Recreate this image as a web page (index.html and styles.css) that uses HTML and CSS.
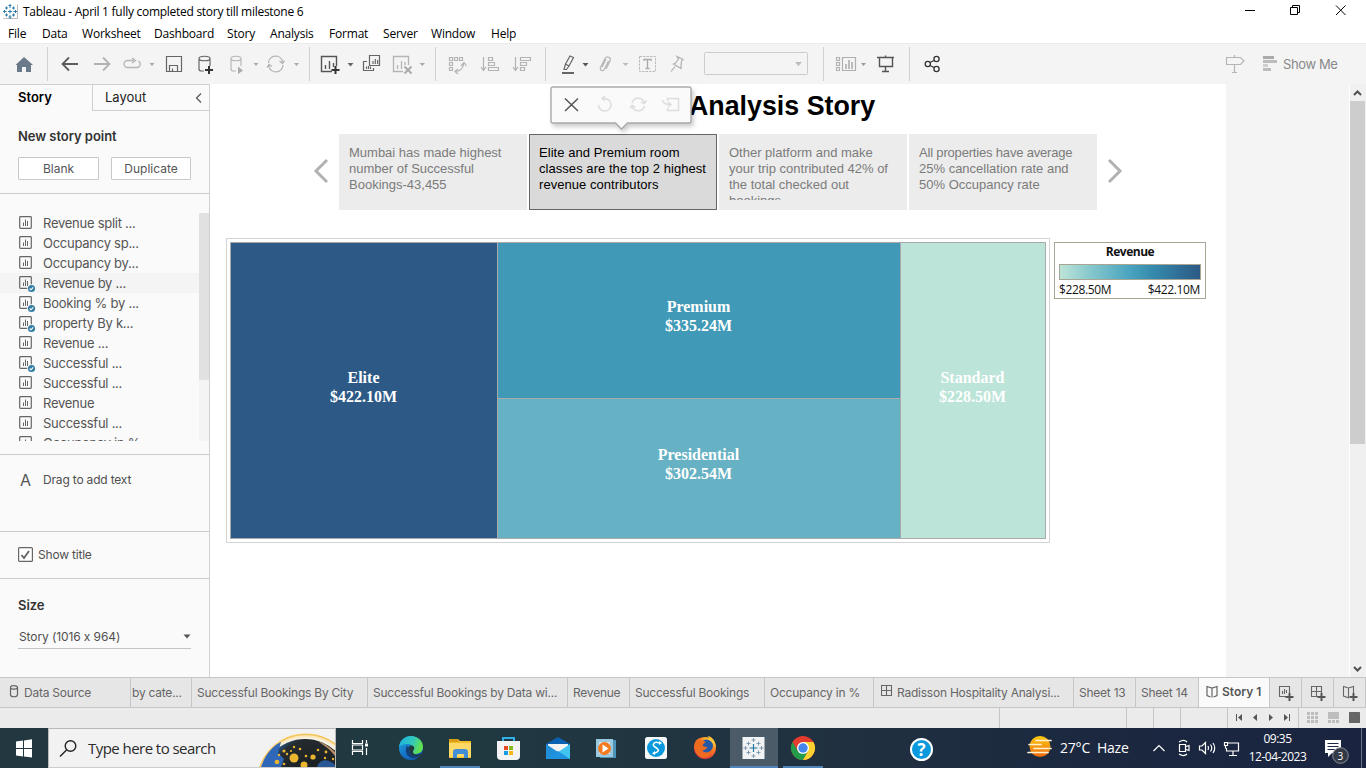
FILE: index.html
```html
<!DOCTYPE html>
<html lang="en">
<head>
<meta charset="utf-8">
<title>Tableau - April 1 fully completed story till milestone 6</title>
<link rel="stylesheet" href="styles.css">
</head>
<body>
<svg class="defs" width="0" height="0">
  <defs>
    <g id="sheet"><rect x=".7" y=".7" width="11.6" height="11.6" rx=".8" fill="none" stroke="#666" stroke-width="1.2"/><path d="M4.5 10V6.5M6.5 10V3.5M8.5 10V5" stroke="#666" fill="none"/></g>
    <g id="used"><circle cx="12.500" cy="12.500" r="4.300" fill="#fafafa"/><circle cx="12.500" cy="12.500" r="3.600" fill="#357ea3"/><path d="M10.700 12.500l1.300 1.300 2.300-2.500" fill="none" stroke="#fff" stroke-width="1.100"/></g>
    <g id="plus"><path d="M0 4h8M4 0v8" stroke-width="2" fill="none"/></g>
    <linearGradient id="edge" x1="0" y1="0" x2="1" y2="1"><stop offset="0" stop-color="#24a9dc"/><stop offset=".5" stop-color="#1673c8"/><stop offset="1" stop-color="#0c4c9b"/></linearGradient>
    <linearGradient id="edge2" x1="0" y1="0" x2="1" y2=".3"><stop offset="0" stop-color="#1eaee5"/><stop offset=".6" stop-color="#31c9bd"/><stop offset="1" stop-color="#62df4f"/></linearGradient>
    <linearGradient id="sun" x1="0" y1="0" x2="0" y2="1"><stop offset="0" stop-color="#fccb10"/><stop offset="1" stop-color="#ed6710"/></linearGradient>
    <radialGradient id="fox" cx=".7" cy=".2" r=".9"><stop offset="0" stop-color="#ffdc3b"/><stop offset=".5" stop-color="#ff7b22"/><stop offset="1" stop-color="#d92748"/></radialGradient>
    <radialGradient id="earth" cx=".62" cy=".45" r=".62"><stop offset="0" stop-color="#151a1c"/><stop offset=".75" stop-color="#252b2e"/><stop offset="1" stop-color="#2f76c8"/></radialGradient>
  </defs>
</svg>

<header class="titlebar">
  <svg width="19" height="24" viewBox="0 0 19 24"><path d="M3.500 18.500h14V4.500" fill="none" stroke="#bbb"/><path d="M10 4v4M8.500 5.500h3M10 15v4M8.500 17h3M3 11.500h3.500M4.500 10v3M13.500 11.500H17M15.500 10v3M6.500 6.500v3M5 8h3M13.500 6.500v3M12 8h3M6.500 13.500v3M5 15h3M13.500 13.500v3M12 15h3M8 11.500h4M10 9.500v4" stroke="#2b7cab" fill="none"/></svg>
  <span class="window-title">Tableau - April 1 fully completed story till milestone 6</span>
  <svg class="window-controls" width="126" height="24" viewBox="1240 0 126 24" fill="none" stroke="#000"><path d="M1245 10.500h10M1290.500 7.500h7v7h-7zM1292.500 7.500v-2h7v7h-2M1336 5.500l9.500 9.500M1345.500 5.500l-9.500 9.500"/></svg>
</header>

<nav class="menubar"><span>File</span><span>Data</span><span>Worksheet</span><span>Dashboard</span><span>Story</span><span>Analysis</span><span>Format</span><span>Server</span><span>Window</span><span>Help</span></nav>

<div class="toolbar">
  <svg viewBox="0 43 47 41"><path d="M15.500 65L24 57l9 8h-2v7h-5v-5h-4v5h-5v-7z" fill="#6a7a8a"/></svg>
  <svg class="sep" viewBox="47 43 68 41" fill="none" stroke-width="1.800"><path d="M62.500 64H78M69 57.500L62.500 64l6.500 6.500" stroke="#5c5c5c"/><path d="M94 64h15.500M103 57.500l6.500 6.500-6.500 6.500" stroke="#b2b2b2"/></svg>
  <svg viewBox="115 43 45 41"><path d="M134 60.500h-6.500a3.500 3.500 0 0 0 0 7H137a3.500 3.500 0 0 0 1.500-6.500M132 58l3.500 2.500L132 63" fill="none" stroke="#b5b5b5" stroke-width="1.300"/><path d="M149.500 63h5l-2.500 3z" fill="#aaa"/></svg>
  <svg viewBox="160 43 30 41"><path d="M166.500 56.500h15v15h-15zM169.500 71v-5.500h8V71M172.500 71v-2.500" fill="none" stroke="#666" stroke-width="1.200"/></svg>
  <svg viewBox="190 43 30 41"><path d="M204 71h-2.500c-1.500 0-2.500-1-2.500-2V58.500M210 58.500V66M199 58.500c0-3 11-3 11 0s-11 3-11 0" fill="none" stroke="#666" stroke-width="1.200"/><use href="#plus" x="205" y="66" stroke="#333"/></svg>
  <svg viewBox="220 43 42 41"><path d="M236 71h-2.500c-1.500 0-2.500-1-2.500-2V58.500M241 58.500V66M231 58.500c0-3 10-3 10 0s-10 3-10 0" fill="none" stroke="#b8b8b8" stroke-width="1.200"/><path d="M238 66.500l5 4-5 3.500zM253.500 63h5l-2.500 3z" fill="#aaa"/></svg>
  <svg viewBox="262 43 47 41"><path d="M268.500 63a7.200 7.200 0 0 1 14-2v2M283 65a7.200 7.200 0 0 1-14 2v-2M279.500 61l3 2.500 2-3M267 67.500l2-3 3 2" fill="none" stroke="#b5b5b5" stroke-width="1.300"/><path d="M294 63h5l-2.500 3z" fill="#aaa"/></svg>
  <svg class="sep" viewBox="309 43 47 41"><path d="M332 71.500h-10.500v-15h15V66M325.500 69v-4M329.500 69v-8M333.500 67v-4" fill="none" stroke="#555" stroke-width="1.400"/><use href="#plus" x="331.500" y="66" stroke="#333"/><path d="M347.500 63h6l-3 3.500z" fill="#666"/></svg>
  <svg viewBox="356 43 30 41"><path d="M369.500 55.500h10v10h-10zM373 64v-3M375.300 64v-5M377.600 64v-4M367 61.500h-3.500v9h10V68M366.500 69v-2.500M368.500 69v-3M370.500 69v-2.500" fill="none" stroke="#666" stroke-width="1.200"/></svg>
  <svg viewBox="386 43 49 41"><path d="M403 71.500h-9.500v-15h15V65M397.500 69v-4M401.500 69v-8M405 65v-3" fill="none" stroke="#b5b5b5" stroke-width="1.300"/><path d="M404.500 66.500l7 7M411.500 66.500l-7 7" stroke="#aaa" stroke-width="2"/><path d="M419.500 63h5.500l-2.700 3z" fill="#aaa"/></svg>
  <svg class="sep" viewBox="435 43 38 41" fill="none" stroke="#b3b3b3" stroke-width="1.200"><path d="M449.500 57.500h3v3h-3zM454.500 57.500h3v3h-3zM459.500 57.500h3v3h-3zM449.500 62.500h3v3h-3zM449.500 67.500h3v3h-3zM455 71.500c5.500 0 8-2.500 9-8.500M458 69l-3 2.500 3 2.500M461 66l3-3.500 2.500 3.500"/></svg>
  <svg viewBox="473 43 32 41" fill="none" stroke="#b3b3b3" stroke-width="1.200"><path d="M483.500 57v13M481 67l2.500 3.500L486 67M488.500 57.500h4v3h-4zM488.500 62.500h6v3h-6zM488.500 67.500h10v3h-10z"/></svg>
  <svg viewBox="505 43 40 41" fill="none" stroke="#b3b3b3" stroke-width="1.200"><path d="M515.500 57v13M513 67l2.500 3.500L518 67M520.500 57.500h10v3h-10zM520.500 62.500h6v3h-6zM520.500 67.500h4v3h-4z"/></svg>
  <svg class="sep" viewBox="545 43 48 41"><path d="M564 69.500l1.500-5.500 4.500-8 3.500 1.500-4.500 8.500-2.500 3.500zM565.500 64l3.500 2" fill="none" stroke="#666" stroke-width="1.200"/><path d="M562 73h12" stroke="#666" stroke-width="2"/><path d="M582.500 63h6l-3 3.500z" fill="#555"/></svg>
  <svg viewBox="593 43 39 41"><path d="M608.500 61l-4 8c-1.500 3-5 1.500-4-1.500l4.500-9c2-3 6.500-1 5 2.500L606 69M602 67l4-8" fill="none" stroke="#b5b5b5" stroke-width="1.200"/><path d="M622.500 63h6l-3 3z" fill="#bbb"/></svg>
  <svg viewBox="632 43 32 41"><path d="M639.500 56.500h16v15h-16z" fill="none" stroke="#bbb" stroke-dasharray="2.500 1"/><path d="M644 61v-1.500h7V61M647.500 60v8.500M645.500 68.500h4" fill="none" stroke="#aaa" stroke-width="1.300"/></svg>
  <svg viewBox="664 43 40 41"><path d="M677 56.500l6 3-1.500 1.500-.5 5 0 2.500-7.500-4.500 2-1 3-4zM675 66.500l-4 5" fill="none" stroke="#b0b0b0" stroke-width="1.200"/></svg>
  <svg viewBox="704 43 119 41"><rect x="704.500" y="52.500" width="103" height="22" rx="1" fill="none" stroke="#ccc"/><path d="M795 62h7l-3.500 4z" fill="#bbb"/></svg>
  <svg class="sep" viewBox="823 43 47 41"><path d="M836.500 57.500h3v3h-3zM836.500 62.500h3v3h-3zM836.500 67.500h3v3h-3zM842.500 57.500h13v13h-13z" fill="none" stroke="#b0b0b0" stroke-width="1.200"/><path d="M846 69v-5M849 69v-9M852 69v-7" stroke="#aaa" stroke-width="1.500"/><path d="M861 63h5l-2.500 3z" fill="#999"/></svg>
  <svg viewBox="870 43 39 41"><path d="M877 57.500h17M879.500 58v8.500h13V58M885.500 66.500v5M882 71.500h7M885.500 55.500v2" fill="none" stroke="#555" stroke-width="1.400"/></svg>
  <svg class="sep" viewBox="909 43 316 41"><path d="M930 62.500l4-2M930 65.500l4 2" stroke="#333" stroke-width="1.300"/><g fill="none" stroke="#333" stroke-width="1.300"><circle cx="927.800" cy="64" r="2.600"/><circle cx="936.500" cy="59" r="2.600"/><circle cx="936.500" cy="69" r="2.600"/></g></svg>
  <svg viewBox="1225 43 30 41"><path d="M1226.500 57.500h14l3.500 3.500-3.500 3.500h-14zM1234.500 64.500v8M1232 72.500h5M1234.500 55v2.500" fill="none" stroke="#b5b5b5" stroke-width="1.200"/></svg>
  <svg viewBox="1255 43 28 41"><path d="M1263 56h11v3h-11z" fill="#aaa"/><path d="M1263 60h14v3h-14zM1263 68h8v3h-8z" fill="#bcbcbc"/><path d="M1263 64h5v3h-5z" fill="#cfcfcf"/></svg>
  <span class="show-me">Show Me</span>
</div>

<main class="workspace">
  <aside class="panel">
    <div class="panel-tabs"><b>Story</b><div class="layout-tab"><span>Layout</span><svg width="8" height="12" viewBox="0 0 8 12"><path d="M6 1.500L1.500 6 6 10.500" fill="none" stroke="#555" stroke-width="1.200"/></svg></div></div>
    <section class="new-point"><h2>New story point</h2><div class="buttons"><button>Blank</button><button>Duplicate</button></div></section>
    <section class="sheets">
      <ul>
        <li><svg><use href="#sheet"/></svg>Revenue split ...</li>
        <li><svg><use href="#sheet"/></svg>Occupancy sp...</li>
        <li><svg><use href="#sheet"/></svg>Occupancy by...</li>
        <li class="hover"><svg><use href="#sheet"/><use href="#used"/></svg>Revenue by ...</li>
        <li><svg><use href="#sheet"/><use href="#used"/></svg>Booking % by ...</li>
        <li><svg><use href="#sheet"/><use href="#used"/></svg>property By k...</li>
        <li><svg><use href="#sheet"/></svg>Revenue ...</li>
        <li><svg><use href="#sheet"/><use href="#used"/></svg>Successful ...</li>
        <li><svg><use href="#sheet"/></svg>Successful ...</li>
        <li><svg><use href="#sheet"/></svg>Revenue</li>
        <li><svg><use href="#sheet"/></svg>Successful ...</li>
        <li><svg><use href="#sheet"/></svg>Occupancy in %</li>
      </ul>
      <div class="list-scroll"><i></i></div>
    </section>
    <section class="drag"><span class="letter">A</span>Drag to add text</section>
    <section class="show-title"><svg width="15" height="15" viewBox="0 0 15 15" fill="none" stroke="#666"><rect x=".6" y=".6" width="13.800" height="13.800" rx="1" fill="#fff" stroke-width="1.200"/><path d="M3.500 8l2.500 3 5-7" stroke-width="1.900"/></svg>Show title</section>
    <section class="size"><h2>Size</h2><div class="size-select">Story (1016 x 964)<svg width="8" height="5" viewBox="0 0 8 5"><path d="M.5.500h7L4 4.500z" fill="#555"/></svg></div></section>
  </aside>

  <div class="canvas">
    <h1>Analysis Story</h1>
    <div class="popup"><svg width="142" height="45" viewBox="551 86 142 45"><path d="M553.500 87h136.500q2 0 2 2v32q0 2-2 2h-61.500l-6 6-6-6h-62.500q-2 0-2-2V89q0-2 2-2z" fill="#fafafa" stroke="#aaa" stroke-width="1.400"/><g fill="none" stroke="#ddd" stroke-width="1.500"><path d="M566 98.500l13 12.500M579 98.500L566 111" stroke="#555"/><path d="M603 98.500h3a6.300 6.300 0 1 1-6.500 6.500M606 96l-3 2.500 3 2.500M633 103a6.500 6.500 0 0 1 12.500 0M645.500 106a6.500 6.500 0 0 1-12.500 0M642 102l3.500 1.500 2-3M631 108.500l2-3 3.500 1.500M668.500 101v-2.500h11v12h-11V108M663.500 100c0 3 2 4.500 8.500 4.500M669 102l3 2.500-3 2.500"/></g></svg></div>
    <div class="navigator">
      <svg width="15" height="26" viewBox="0 0 15 26"><path d="M13 3L3 13l10 10" fill="none" stroke="#b1b1b1" stroke-width="3" stroke-linecap="square"/></svg>
      <div class="points">
        <div class="point"><p>Mumbai has made highest<br>number of Successful<br>Bookings-43,455</p></div>
        <div class="point active"><p>Elite and Premium room<br>classes are the top 2 highest<br>revenue contributors</p></div>
        <div class="point"><p>Other platform and make<br>your trip contributed 42% of<br>the total checked out<br>bookings</p></div>
        <div class="point"><p><span class="tight">All properties have average</span><br>25% cancellation rate and<br>50% Occupancy rate</p></div>
      </div>
      <svg width="15" height="26" viewBox="0 0 15 26"><path d="M2 3l10 10L2 23" fill="none" stroke="#b1b1b1" stroke-width="3" stroke-linecap="square"/></svg>
    </div>
    <div class="viz">
      <div class="frame"><div class="treemap">
        <div class="tile elite">Elite<br>$422.10M</div>
        <div class="tile premium">Premium<br>$335.24M</div>
        <div class="tile presidential">Presidential<br>$302.54M</div>
        <div class="tile standard">Standard<br>$228.50M</div>
      </div></div>
      <div class="legend"><b>Revenue</b><div class="ramp"></div><div class="range"><span>$228.50M</span><span>$422.10M</span></div></div>
    </div>
  </div>
  <div class="outside"></div>
  <div class="scrollbar"><svg width="16" height="17" viewBox="0 0 16 17"><path d="M4 11l3.500-3.500L11 11" fill="none" stroke="#505050" stroke-width="2"/></svg><i></i><svg width="16" height="17" viewBox="0 0 16 17"><path d="M4 7l3.500 3.500L11 7" fill="none" stroke="#505050" stroke-width="2"/></svg></div>
</main>

<div class="tabs">
  <span class="source"><svg width="11" height="13" viewBox="0 0 11 13"><path d="M1.500 2.500v7c0 3 7 3 7 0v-7c0-2.500-7-2.500-7 0s7 2 7 0" fill="none" stroke="#666" stroke-width="1.200"/></svg>Data Source</span>
  <span class="cut">by cate...</span><span>Successful Bookings By City</span><span>Successful Bookings by Data wi...</span><span>Revenue</span><span>Successful Bookings</span><span>Occupancy in %</span>
  <span class="dash"><svg width="12" height="12" viewBox="0 0 12 12"><path d="M.5.500h10v10H.5zM5.500.500v10M.5 5.500h10" fill="none" stroke="#666" stroke-width="1.100"/></svg>Radisson Hospitality Analysi...</span>
  <span>Sheet 13</span><span>Sheet 14</span>
  <span class="current"><svg width="12" height="14" viewBox="0 0 12 14"><path d="M6 3v9.500M4.500 12L1 10.500V1.500L6 3l5-1.500v9L7.500 12" fill="none" stroke="#666" stroke-width="1.200"/></svg>Story 1</span>
  <span class="new"><svg width="16" height="16" viewBox="0 0 16 16"><path d="M8 11.500H1.500v-10h10V8M4.500 9V6M6.500 9V4M8.500 8V5" fill="none" stroke="#666" stroke-width="1.100"/><use href="#plus" x="7.500" y="8" stroke="#555"/></svg></span>
  <span class="new"><svg width="16" height="16" viewBox="0 0 16 16"><path d="M8 11.500H1.500v-10h10V8M6.500 1.500v10M1.500 6.500h10" fill="none" stroke="#666" stroke-width="1.100"/><use href="#plus" x="7.500" y="8" stroke="#555"/></svg></span>
  <span class="new"><svg width="16" height="16" viewBox="0 0 16 16"><path d="M7 13l-5.500-2V1.500L6.500 3l5-1.500V8M6.500 3v9.500" fill="none" stroke="#666" stroke-width="1.100"/><use href="#plus" x="7.500" y="8" stroke="#555"/></svg></span>
</div>

<div class="status">
  <span></span><span></span><span></span><span></span><span></span>
  <span><svg width="70" height="20" viewBox="1228 708 70 20" fill="#555"><path d="M1236 714h1v7h-1zM1242 714v7l-4-3.500zM1257 714v7l-4-3.500zM1269 714v7l4-3.500zM1284 714v7l4-3.500zM1289 714h1v7h-1z"/></svg></span>
  <span><svg width="67" height="20" viewBox="1299 708 67 20"><path d="M1307 712h3v3h-3zM1311 712h3v3h-3zM1315 712h3v3h-3zM1307 716h3v3h-3zM1311 716h3v3h-3zM1315 716h3v3h-3zM1307 720h3v3h-3zM1311 720h3v3h-3zM1315 720h3v3h-3zM1328 712h11v7h-11zM1328 720h3v3h-3zM1332 720h3v3h-3zM1336 720h3v3h-3z" fill="#bdbdbd"/><rect x="1349" y="712" width="11" height="11" rx=".5" fill="#666"/></svg></span>
</div>

<footer class="taskbar">
  <svg viewBox="0 728 48 40"><path d="M16 741.500l7-1v7.500h-7zM24 740.400l8-1.100v8.700h-8zM16 749h7v7.400l-7-1zM24 749h8v8.600l-8-1.100z" fill="#fff"/></svg>
  <div class="search">
    <svg width="20" height="20" viewBox="59 738 20 20" fill="none" stroke="#222" stroke-width="1.400"><circle cx="70.500" cy="746" r="5.300"/><path d="M66.500 750l-6.500 6.500"/></svg>
    <span>Type here to search</span>
    <svg class="globe" width="78" height="36" viewBox="257 732 78 36"><defs><clipPath id="globe-clip"><rect x="257" y="732" width="78" height="36"/></clipPath></defs><g clip-path="url(#globe-clip)"><circle cx="305" cy="782" r="48" fill="#fbe9c0"/><circle cx="306" cy="784" r="48.500" fill="none" stroke="#f3c45c" stroke-width="1.500"/><circle cx="306" cy="786" r="47.500" fill="#f7f3e8"/><circle cx="305" cy="785" r="45" fill="url(#earth)"/><path d="M261 768c5-14 12-21 20-25l-3 11 6 6-3 8z" fill="#2f68b9"/><path d="M317 768c2-7 10-10 18-2v2z" fill="#295795"/><path d="M318 742c8 3 13 7 17 11v4c-6-8-12-11-17-15z" fill="#b68f65"/><g fill="#eab52f"><circle cx="294" cy="759" r="4.500"/><circle cx="313" cy="758" r="2.600"/><circle cx="304" cy="766" r="3.500"/><circle cx="277" cy="763" r="2.300"/><circle cx="284" cy="752" r="1.600"/><circle cx="294" cy="748" r="1.200"/><circle cx="300" cy="750" r="1.300"/><circle cx="318" cy="751" r="1.300"/><circle cx="326" cy="753" r="1.400"/><circle cx="325" cy="759" r="1.200"/><circle cx="333" cy="760" r="1.200"/><circle cx="287" cy="755" r="1.200"/><circle cx="291" cy="752" r="1.100"/><circle cx="284" cy="765" r="1.300"/><circle cx="279" cy="756" r="1.200"/><circle cx="306" cy="757" r="1.300"/></g></g></svg>
  </div>
  <svg viewBox="336 728 50 40" fill="none" stroke="#fff" stroke-width="1.200"><path d="M352.500 740v3.500h10V740M352.500 755v-3.500h10v3.500M352.500 745h10v5h-10zM366.500 740v3M366.500 748v7"/><path d="M365 743.500h3v3h-3z" fill="#fff" stroke="none"/></svg>
  <svg viewBox="386 728 50 40"><circle cx="411" cy="748" r="12" fill="url(#edge)"/><path d="M399 747c1-7 6-11 12-11 7 0 12 5 12 11 0 5-4 7-8 7-3 0-4-2-2-4 1-3-2-6-5-6-4 0-8 1-9 3z" fill="url(#edge2)"/><path d="M407 746c-3 5 0 12 7 12 3 0 5-1 7-3-3 1-7 1-9-1-2-1-4-4-3-7z" fill="#123f77"/><path d="M409 747c1-2 4-2 5 0 1 2-1 3-1 5 0 3 6 4 9 1l-2 3c-6 1-12-2-11-9z" fill="#223940"/></svg>
  <svg viewBox="436 728 48 40"><path d="M449 739h9l2 2h11v17h-22z" fill="#f5bd28"/><path d="M449 743h22v14h-22z" fill="#ffd968"/><path d="M449 739h9l1 3h-10z" fill="#d99c16"/><path d="M453 758v-6q0-3 3-3h9q3 0 3 3v6h-4v-3q0-1-1-1h-5q-1 0-1 1v3z" fill="#428fd8"/><path d="M440 766h40v2h-40z" fill="#4f84bb"/></svg>
  <svg viewBox="484 728 48 40"><path d="M503 743v-5h11v5" fill="none" stroke="#30b2e8" stroke-width="2"/><path d="M497 741h23v15q0 4-4 4h-15q-4 0-4-4z" fill="#f3f3f3"/><path d="M504 746h4v4h-4z" fill="#e34b25"/><path d="M509 746h4v4h-4z" fill="#83bd22"/><path d="M504 751h4v4h-4z" fill="#159ee4"/><path d="M509 751h4v4h-4z" fill="#f8b815"/></svg>
  <svg viewBox="532 728 49 40"><path d="M546 744l12-7 12 7v15h-24z" fill="#0b61b2"/><path d="M548 744h20v8h-20z" fill="#f4f4f4"/><path d="M546 744l12 8-9 7h-3z" fill="#208ed8"/><path d="M570 744l-22 15h22z" fill="#42c4f1"/><path d="M546 759l12-8 12 8z" fill="#1f93e0"/></svg>
  <svg viewBox="581 728 50 40"><path d="M600 740h16v18h-16z" fill="#4e94b9"/><path d="M596 739h17v18h-17z" fill="#9bc9df"/><path d="M599 742h11v12h-11z" fill="#d6e8ef"/><circle cx="604.500" cy="748.500" r="6.500" fill="#f27a20"/><path d="M602.500 744.500v8l6-4z" fill="#fff"/></svg>
  <svg viewBox="631 728 49 40"><rect x="645" y="737" width="22" height="22" rx="2.500" fill="#f8f8f8"/><circle cx="656" cy="748" r="9" fill="#0999dc"/><path d="M659 743c-4-2-8 1.500-4 4s5 4 0 6" fill="none" stroke="#fff" stroke-width="1.500"/><path d="M659 741l3 2-3 2zM655 751v4l-3-1.500z" fill="#fff"/></svg>
  <svg viewBox="680 728 49 40"><circle cx="704.500" cy="748" r="11" fill="url(#fox)"/><circle cx="706" cy="746" r="6.500" fill="#2659a4"/><path d="M694 744c1-4 3-5 5-6l1 3c2-1 4 0 5 1l-3 3c1 2 3 2 5 2-2 4-6 3-7 5 4 3 9 1 12-3 0 6-5 9-10 9-6-2-9-8-8-14z" fill="#ef6b20"/><path d="M707 736c6 1 9 7 8 12-2-5-4-7-8-12z" fill="#ffc439"/></svg>
  <svg class="running" viewBox="730 728 48 40"><path d="M730 766h48v2h-48z" fill="#4f84bb"/><rect x="742.500" y="737" width="22" height="22" fill="#f2f3f5"/><path d="M753.500 744v8M749.500 748h8" stroke="#24769f" stroke-width="1.200"/><path d="M753.500 738v4M751.500 740h4M753.500 754v4M751.500 756h4M743.500 748h4M745.500 746v4M759.500 748h4M761.500 746v4M748.500 741.500v4M746.500 743.500h4M758.500 741.500v4M756.500 743.500h4M748.500 750.500v4M746.500 752.500h4M758.500 750.500v4M756.500 752.500h4" stroke="#7791ad" stroke-width=".9"/></svg>
  <svg viewBox="778 728 122 40"><circle cx="803" cy="748" r="12" fill="#e33b2e"/><path d="M792.600 742A12 12 0 0 0 803 760l5.200-9H797.800z" fill="#219c4b"/><path d="M813.400 742A12 12 0 0 1 803 760l5.200-9-5.200-9z" fill="#fdd22f"/><circle cx="803" cy="748" r="6" fill="#fff"/><circle cx="803" cy="748" r="4.700" fill="#4285ed"/><path d="M783 766h40v2h-40z" fill="#4f84bb"/></svg>
  <div class="help"><i>?</i></div>
  <svg viewBox="1018 728 42 40"><circle cx="1040" cy="746.500" r="10.500" fill="url(#sun)"/><path d="M1036 740.500h15M1029 744.500h12M1034 748.500h17M1028 752.500h20" stroke="#fff0cf" stroke-width="1.700" stroke-linecap="round"/></svg>
  <span class="weather">27°C&nbsp; Haze</span>
  <svg viewBox="1142 728 106 40" fill="none" stroke="#fff" stroke-width="1.200"><path d="M1153.500 751l5.500-5.500 5.500 5.500M1179.500 744.500h6v7h-6zM1186 746.500l3-1v5l-3-1M1179 742c3-2 6-2 8 0M1179 754c3 2 6 2 8 0M1199.500 746h2.500l3.500-3.500v11L1202 750h-2.500zM1208 746q1 2 0 4M1210.500 744.500q2.500 3.500 0 7M1213 743q3.500 5 0 10M1227.500 743h11v8h-12v-3M1233 751v4M1229 755.500h8M1224.500 742.500h3v3h-3zM1225.500 745.500v3"/></svg>
  <div class="clock"><span>09:35</span><span>12-04-2023</span></div>
  <svg viewBox="1307 728 59 40"><path d="M1325 740h16v13h-9l-4 4v-4h-3z" fill="#fff"/><path d="M1327.500 743.500h11M1327.500 746.500h11M1327.500 749.500h7" stroke="#1b2841"/><circle cx="1340.500" cy="755.500" r="7.800" fill="#333a46" stroke="#8b9098"/><text x="1337.500" y="759.500" class="badge">3</text><path d="M1361.500 728v40" stroke="#6a7385"/></svg>
</footer>
</body>
</html>
```
FILE: styles.css
```css
* { box-sizing: border-box; }
body { margin: 0; width: 1366px; height: 768px; overflow: hidden; display: flex; flex-direction: column; background: #fff; font-family: Inter, sans-serif; font-feature-settings: "calt" 0; color: #333; }
svg { display: block; flex: none; }
.defs { position: absolute; }
h1, h2, p, ul { margin: 0; padding: 0; }

.titlebar { height: 24px; display: flex; align-items: center; font: 12px "Open Sans", sans-serif; color: #000; }
.window-title { margin: -2px 0 0 4px; letter-spacing: -.275px; }
.window-controls { margin-left: auto; }
.menubar { height: 19px; padding-left: 8px; display: grid; grid-template-columns: 34px 40px 72px 73px 43px 59px 54px 48px 60px 40px; font: 12px/20px "Open Sans", sans-serif; letter-spacing: -.2px; color: #000; }

.toolbar { height: 41px; background: #f4f4f4; border-top: 1px solid #ececec; display: grid; grid-template-columns: 47px 68px 45px 30px 30px 42px 47px 47px 30px 49px 38px 32px 40px 48px 39px 32px 40px 119px 47px 39px 316px 30px 28px 83px; align-items: center; }
.toolbar svg { width: 100%; height: 41px; margin-top: -1px; }
.toolbar .sep { background: linear-gradient(#d0d0d0, #d0d0d0) 0 4px / 1px 34px no-repeat; }
.show-me { margin-top: -1px; font-size: 13px; color: #888; white-space: nowrap; letter-spacing: -.4px; }

.workspace { height: 593px; display: flex; }
.panel { width: 210px; background: #fafafa; border-right: 1px solid #d0d0d0; border-top: 1px solid #d0d0d0; font-size: 12px; color: #505050; }
.panel-tabs { height: 26px; display: flex; font-size: 13px; line-height: 25px; color: #222; }
.panel-tabs b { width: 92px; padding-left: 18px; font-weight: 600; color: #000; }
.layout-tab { flex: 1; padding: 0 6px 0 12px; border-left: 1px solid #d0d0d0; border-bottom: 1px solid #d0d0d0; display: flex; justify-content: space-between; align-items: center; }
.panel h2 { font-size: 13px; line-height: 18px; font-weight: 600; color: #333; letter-spacing: -.05px; }
.new-point { height: 83px; padding: 16px 18px 0; border-bottom: 1px solid #ccc; }
.buttons { margin-top: 12px; display: grid; grid-template-columns: 81px 80px; gap: 12px; }
.buttons button { height: 23px; padding: 0 0 1px; border: 1px solid #c8c8c8; border-radius: 1px; background: #fff; font: 12px Inter, sans-serif; color: #555; }
.sheets { height: 261px; padding-top: 19px; display: flex; border-bottom: 1px solid #ccc; }
.sheets ul { width: 199px; height: 228px; overflow: hidden; list-style: none; }
.sheets li { height: 20px; padding-left: 19px; display: flex; align-items: center; font-size: 13px; color: #555; white-space: nowrap; letter-spacing: -.26px; }
.sheets li svg { width: 24px; height: 17px; margin-top: 3px; }
.sheets li.hover { background: #f4f4f4; }
.list-scroll { width: 10px; height: 228px; background: #f4f4f4; }
.list-scroll i { display: block; height: 167px; background: #e1e1e1; }
.drag { height: 77px; padding: 15px 0 0 20px; border-bottom: 1px solid #ccc; display: flex; line-height: 20px; letter-spacing: -.18px; }
.letter { width: 23px; font-size: 16px; color: #555; }
.show-title { height: 47px; padding: 0 0 1px 18px; border-bottom: 1px solid #ccc; display: flex; align-items: center; gap: 5px; letter-spacing: -.2px; }
.size { padding: 17px 18px 0; }
.size-select { height: 25px; margin-top: 10px; padding: 0 0 0 1px; display: flex; align-items: center; justify-content: space-between; border-bottom: 1px solid #c4c4c4; letter-spacing: -.1px; }

.canvas { width: 1016px; position: relative; background: #fff; }
h1 { height: 50px; padding-left: 479px; font: bold 26.800px/45px "Liberation Sans", Arial, sans-serif; color: #000; }
.popup { position: absolute; left: 340px; top: 2px; filter: drop-shadow(2px 3px 2px #0003); }
.navigator { height: 76px; padding: 0 0 2px 103px; display: flex; align-items: center; }
.points { margin: 2px 11px 0 11px; display: grid; grid-template-columns: repeat(4, 188px); gap: 2px; }
.point { height: 76px; padding: 11px 0 10px 10px; background: #ececec; color: #7b7b7b; font: 13px/16px "Liberation Sans", Arial, sans-serif; white-space: nowrap; }
.point p { height: 55px; overflow: hidden; }
.point.active { padding: 10px 0 9px 9px; background: #dadada; border: 1px solid #666; color: #000; letter-spacing: .05px; }
.tight { letter-spacing: -.18px; }
.viz { padding: 28px 0 0 16px; display: flex; gap: 4px; align-items: flex-start; }
.frame { width: 824px; height: 305px; padding: 3px; border: 1px solid #d3d3d3; }
.treemap { width: 816px; height: 297px; padding: 1px; background: #aaa; display: grid; grid-template-columns: 266px 402px 144px; grid-template-rows: 155px 139px; gap: 1px; }
.tile { padding: 0 1px 8px 0; display: flex; align-items: center; justify-content: center; text-align: center; color: #fff; font: bold 16px/19px "Liberation Serif", "Times New Roman", serif; }
.elite { grid-row: 1 / 3; background: #2c5985; }
.premium { grid-column: 2; background: #4099b6; padding-bottom: 9px; }
.presidential { grid-column: 2; grid-row: 2; background: #66b1c3; padding-bottom: 9px; }
.standard { grid-column: 3; grid-row: 1 / 3; background: #bce4d8; }
.legend { width: 152px; height: 57px; margin-top: 4px; padding: 0 4px; border: 1px solid #a9a594; color: #111; font: 12px/19px "Open Sans", sans-serif; }
.legend b { display: block; height: 21px; line-height: 18px; text-align: center; letter-spacing: -.5px; }
.ramp { height: 16px; border: 1px solid #a9a594; background: linear-gradient(90deg, #bce4d8, #7fc3cb 25%, #49a4bf 50%, #3488ab 68%, #2c5985); }
.range { padding-right: 1px; display: flex; justify-content: space-between; letter-spacing: -.35px; }
.outside { width: 123px; background: #f4f4f4; }
.scrollbar { width: 17px; padding-right: 1px; border-left: 1px solid #fff; background: #f0f0f0; display: flex; flex-direction: column; }
.scrollbar i { height: 343px; margin-bottom: auto; background: #cdcdcd; }

.tabs { height: 31px; border-top: 1px solid #c6c6c6; border-bottom: 1px solid #c6c6c6; background: #e6e6e6; display: grid; grid-template-columns: 131px 61px 176px 200px 62px 135px 109px 200px 62px 63px 71px 32px 32px 32px; font-size: 12px; color: #666; letter-spacing: -.23px; }
.tabs span { padding: 0 0 0 5px; border-right: 1px solid #c6c6c6; display: flex; align-items: center; white-space: nowrap; overflow: hidden; }
.tabs .source { padding-left: 9px; gap: 4px; }
.tabs .source svg, .tabs .dash svg { margin-top: -3px; }
.tabs .cut { padding-left: 1px; }
.tabs .dash { padding-left: 7px; gap: 4px; }
.tabs .current { padding: 0 0 2px 7px; gap: 4px; background: #fafafa; font-weight: 600; color: #555; letter-spacing: 0; }
.tabs .new { padding-left: 8px; }
.status { height: 20px; background: #ebebeb; display: grid; grid-template-columns: 1000px 127px 27px 27px 47px 71px 67px; }
.status span { border-right: 1px solid #c6c6c6; overflow: hidden; }
.status span:last-child { border: 0; }

.taskbar { height: 40px; display: grid; grid-template-rows: 40px; grid-template-columns: 48px 288px 50px 50px 48px 48px 49px 50px 49px 50px 48px 122px 118px 42px 82px 106px 59px 59px; background: linear-gradient(90deg, #22373f, #203941 35%, #202f40 65%, #1b283f 80%, #1a2440); color: #fff; font-family: "Open Sans", sans-serif; }
.taskbar > svg { width: 100%; height: 40px; }
.search { height: 40px; padding-left: 10px; border: 1px solid #b9b9b9; border-bottom-color: #ccc; background: #f2f2f2; display: flex; align-items: center; color: #2b2b2b; font-size: 15px; white-space: nowrap; }
.search span { width: 170px; margin-left: 9px; letter-spacing: -.55px; }
.search .globe { align-self: flex-end; }
.running { background: #4b5c68; }
.help { display: flex; align-items: center; padding: 2px 0 0 10px; }
.help i { width: 23px; height: 23px; border: 2px solid #fff; border-radius: 50%; background: #0999dc; text-align: center; font: bold 17px/19px "Open Sans", sans-serif; }
.weather { font-size: 14px; line-height: 40px; white-space: nowrap; letter-spacing: -.2px; }
.clock { padding-top: 2px; display: flex; flex-direction: column; align-items: center; font-size: 12px; line-height: 18px; letter-spacing: -.5px; white-space: nowrap; }
.badge { font: 10px "Open Sans", sans-serif; fill: #fff; }
```
